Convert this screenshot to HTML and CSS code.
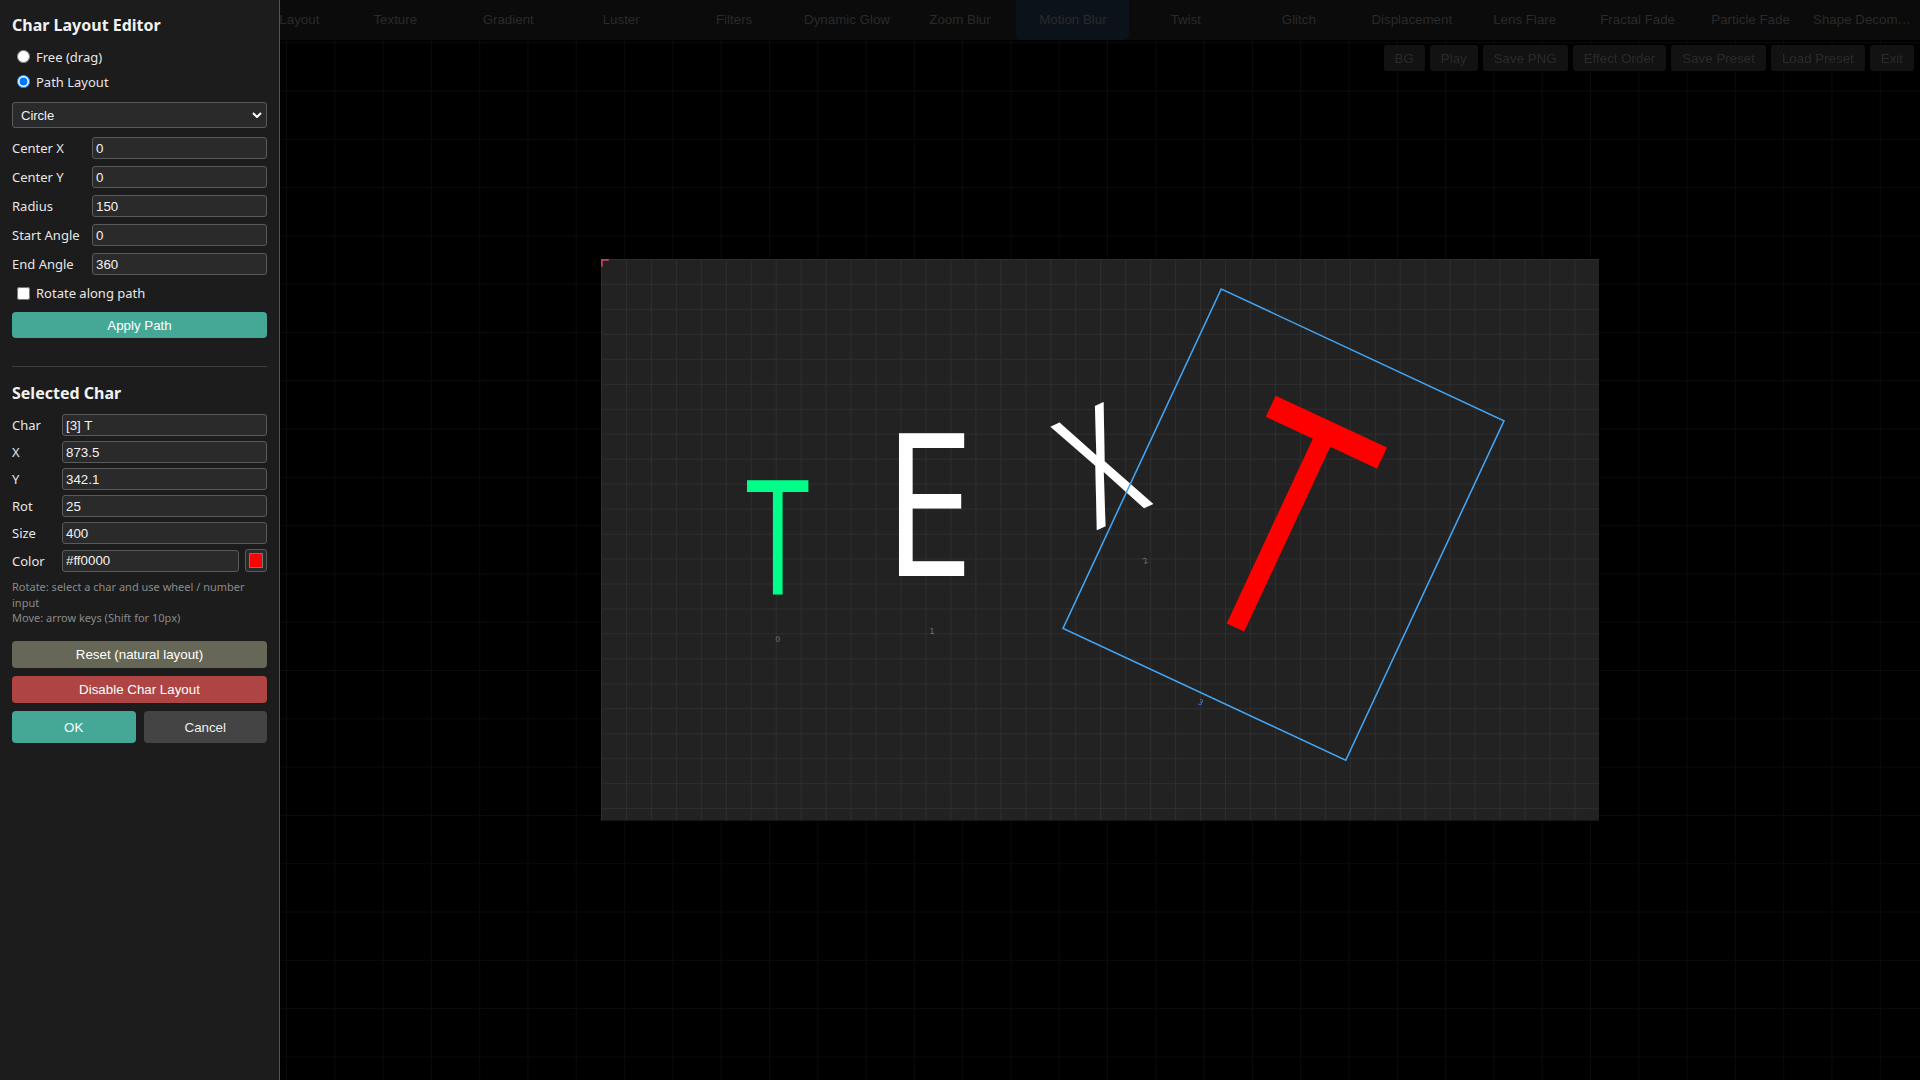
FILE: index.html
```html
<!DOCTYPE html>
<html lang="en">
<head>
<meta charset="utf-8">
<title>Char Layout Editor</title>
<link rel="stylesheet" href="styles.css">
</head>
<body>
<main class="stage">
  <div class="canvas">
    <svg class="scene" viewBox="0 0 1280 720" preserveAspectRatio="none">
      <defs>
        <pattern id="grid" width="32" height="32" patternUnits="userSpaceOnUse">
          <path class="grid-line" d="M0 0H32M0 0V32"/>
        </pattern>
      </defs>
      <rect class="canvas-bg" width="1280" height="720"/>
      <rect width="1280" height="720" fill="url(#grid)"/>
      <path class="corner-mark" d="M1 10V1H10"/>

      <g transform="translate(226.5 356.4)">
        <g transform="scale(0.74 1.02)"><text class="glyph" y="71.4" font-size="200" fill="#00ff88">T</text></g>
        <text class="idx" y="134.3">0</text>
      </g>

      <g transform="translate(420 315.4)">
        <g transform="scale(0.84 1.02)"><text class="glyph" y="89.3" font-size="250" fill="#ffffff">E</text></g>
        <text class="idx" x="4.4" y="165">1</text>
      </g>

      <g transform="translate(641 265) rotate(-25)">
        <g transform="scale(0.7 1.02)"><text class="glyph" y="71.4" font-size="200" fill="#ffffff">X</text></g>
        <text class="idx" y="138">2</text>
      </g>

      <g transform="translate(875 340.5) rotate(25)">
        <g transform="scale(0.74 1.02)"><text class="glyph" y="142.8" font-size="400" fill="#ff0000">T</text></g>
        <rect class="sel-box" x="-200" y="-240" width="400" height="480"/>
        <text class="idx idx-sel" y="255">3</text>
      </g>
    </svg>
  </div>
</main>

<header class="topbar">
  <nav class="tabs">
    <div class="tab tab-first">Layout</div>
    <div class="tab">Texture</div>
    <div class="tab">Gradient</div>
    <div class="tab">Luster</div>
    <div class="tab">Filters</div>
    <div class="tab">Dynamic Glow</div>
    <div class="tab">Zoom Blur</div>
    <div class="tab active">Motion Blur</div>
    <div class="tab">Twist</div>
    <div class="tab">Glitch</div>
    <div class="tab">Displacement</div>
    <div class="tab">Lens Flare</div>
    <div class="tab">Fractal Fade</div>
    <div class="tab">Particle Fade</div>
    <div class="tab">Shape Decomposition</div>
  </nav>
  <div class="toolbar">
    <button class="tool-btn">BG</button>
    <button class="tool-btn">Play</button>
    <button class="tool-btn">Save PNG</button>
    <button class="tool-btn">Effect Order</button>
    <button class="tool-btn">Save Preset</button>
    <button class="tool-btn">Load Preset</button>
    <button class="tool-btn">Exit</button>
  </div>
</header>

<aside class="editor">
  <h2 class="editor-title">Char Layout Editor</h2>
  <div class="mode-group">
    <label class="check-row"><input type="radio" name="mode">Free (drag)</label>
    <label class="check-row"><input type="radio" name="mode" checked>Path Layout</label>
  </div>
  <div class="select-wrap">
    <select class="field select"><option>Circle</option></select>
    <svg class="chevron" viewBox="0 0 10 6"><path d="M1 1l4 4 4-4"/></svg>
  </div>
  <div class="path-fields">
    <label class="field-row"><span class="field-label">Center X</span><input class="field" value="0"></label>
    <label class="field-row"><span class="field-label">Center Y</span><input class="field" value="0"></label>
    <label class="field-row"><span class="field-label">Radius</span><input class="field" value="150"></label>
    <label class="field-row"><span class="field-label">Start Angle</span><input class="field" value="0"></label>
    <label class="field-row"><span class="field-label">End Angle</span><input class="field" value="360"></label>
  </div>
  <label class="check-row rotate-row"><input type="checkbox">Rotate along path</label>
  <button class="btn btn-teal btn-apply">Apply Path</button>

  <div class="divider"></div>

  <h2 class="editor-title">Selected Char</h2>
  <div class="char-fields">
    <label class="field-row"><span class="field-label">Char</span><input class="field" value="[3] T"></label>
    <label class="field-row"><span class="field-label">X</span><input class="field" value="873.5"></label>
    <label class="field-row"><span class="field-label">Y</span><input class="field" value="342.1"></label>
    <label class="field-row"><span class="field-label">Rot</span><input class="field" value="25"></label>
    <label class="field-row"><span class="field-label">Size</span><input class="field" value="400"></label>
    <div class="field-row color-row"><span class="field-label">Color</span><input class="field" value="#ff0000"><span class="swatch"><span class="swatch-fill"></span></span></div>
  </div>
  <p class="hint">Rotate: select a char and use wheel / number input<br>Move: arrow keys (Shift for 10px)</p>
  <button class="btn btn-olive btn-reset">Reset (natural layout)</button>
  <button class="btn btn-red btn-disable">Disable Char Layout</button>
  <div class="btn-pair">
    <button class="btn btn-teal btn-lg">OK</button>
    <button class="btn btn-grey btn-lg">Cancel</button>
  </div>
</aside>
</body>
</html>
```

FILE: styles.css
```css
html, body {
  margin: 0;
  height: 100%;
}

body {
  overflow: hidden;
  background-color: #000;
  background-image:
    linear-gradient(90deg, #0b0b0b 1px, transparent 1px),
    linear-gradient(180deg, #0b0b0b 1px, transparent 1px);
  background-size: 48.3px 48.3px;
  background-position: 44.5px 42.2px;
  font-family: "Noto Sans", "Open Sans", sans-serif;
}

/* ---------- stage ---------- */
.stage {
  height: 100vh;
  margin-left: 280px;
  display: flex;
  align-items: center;
  justify-content: center;
}

.canvas {
  width: 998.4px;
  height: 561.6px;
}

.scene {
  display: block;
  width: 100%;
  height: 100%;
}

.canvas-bg { fill: #222; }

.grid-line {
  fill: none;
  stroke: #2e2e2e;
  stroke-width: 2.6;
}

.corner-mark {
  fill: none;
  stroke: #c8405a;
  stroke-width: 2.4;
}

.glyph {
  font-family: "Open Sans", "Noto Sans", sans-serif;
  font-weight: 400;
  text-anchor: middle;
}

.idx {
  font-family: "DejaVu Sans", sans-serif;
  font-size: 10px;
  fill: #777;
  text-anchor: middle;
}

.idx-sel { fill: #4b8fd6; }

.sel-box {
  fill: none;
  stroke: #42a5f5;
  stroke-width: 2;
}

/* ---------- top bar ---------- */
.topbar {
  position: fixed;
  top: 0;
  left: 0;
  right: 0;
}

.tabs {
  display: grid;
  grid-template-columns: repeat(17, 1fr);
  height: 40px;
  background: #0b0b0b;
}

.tab {
  min-width: 0;
  padding: 0 6px;
  text-align: center;
  white-space: nowrap;
  overflow: hidden;
  text-overflow: ellipsis;
  color: #2a2a2a;
  font: 13.33px/40px "Liberation Sans", Arial, sans-serif;
}

.tab-first {
  grid-column-start: 3;
  padding-left: 40px;
}

.tab.active {
  background: #0c1219;
  border-radius: 0 0 6px 6px;
}

.toolbar {
  display: flex;
  justify-content: flex-end;
  gap: 5px;
  padding: 5px 6px 0;
}

.tool-btn {
  height: 26px;
  padding: 0 11px;
  border: none;
  border-radius: 3px;
  background: #121212;
  color: #2b2b2b;
  font: 13.33px "Liberation Sans", Arial, sans-serif;
}

/* ---------- editor panel ---------- */
.editor {
  position: fixed;
  top: 0;
  left: 0;
  bottom: 0;
  width: 280px;
  box-sizing: border-box;
  padding: 14px 12px 0;
  background: #1c1c1c;
  border-right: 1px solid #555;
  color: #e6e6e6;
  font-size: 13px;
}

.editor-title {
  margin: 0;
  font-size: 16px;
  font-weight: 700;
  line-height: 22px;
  color: #f2f2f2;
}

.mode-group { margin-top: 8px; }

.check-row {
  display: flex;
  align-items: center;
  height: 25px;
}

.check-row input {
  margin: 0 6px 0 5px;
}

.select-wrap {
  position: relative;
  margin-top: 8px;
}

.field {
  box-sizing: border-box;
  height: 22px;
  padding: 0 3px;
  background: #2a2a2a;
  border: 1px solid #5a5a5a;
  border-radius: 3px;
  color: #f2f2f2;
  font: 13.33px "Liberation Sans", Arial, sans-serif;
  outline: none;
}

.select {
  display: block;
  width: 100%;
  height: 26px;
  padding: 0 8px;
  appearance: none;
  font-size: 13px;
}

.chevron {
  position: absolute;
  right: 5px;
  top: 10px;
  width: 10px;
  height: 6px;
  fill: none;
  stroke: #fff;
  stroke-width: 2;
}

.path-fields {
  margin-top: 9px;
  display: flex;
  flex-direction: column;
  gap: 7px;
}

.field-row {
  display: flex;
  align-items: center;
}

.field-label {
  flex: none;
  width: 80px;
}

.field-row .field {
  flex: 1;
  min-width: 0;
}

.rotate-row {
  margin-top: 8px;
  height: 20px;
}

.btn {
  display: block;
  width: 100%;
  padding: 0;
  border: none;
  border-radius: 4px;
  color: #fff;
  font: 13.33px "Liberation Sans", Arial, sans-serif;
}

.btn-teal { background: #45a896; }
.btn-olive { background: #676757; }
.btn-red { background: #ae4444; }
.btn-grey { background: #444; color: #eee; }

.btn-apply {
  margin-top: 9px;
  height: 26px;
}

.divider {
  height: 1px;
  background: #3e3e3e;
  margin: 28px 0 15px;
}

.char-fields {
  margin-top: 10px;
  display: flex;
  flex-direction: column;
  gap: 5px;
}

.char-fields .field-label { width: 50px; }

.color-row { height: 23px; }

.swatch {
  flex: none;
  display: flex;
  width: 22px;
  height: 23px;
  margin-left: 6px;
  padding: 3px;
  box-sizing: border-box;
  background: #2a2a2a;
  border: 1px solid #5a5a5a;
  border-radius: 3px;
}

.swatch-fill {
  flex: 1;
  background: #f00;
  border: 1px solid #777;
}

.hint {
  margin: 7px 0 0;
  font-size: 11px;
  line-height: 15.5px;
  color: #8a8a8a;
}

.btn-reset {
  margin-top: 15.5px;
  height: 27px;
}

.btn-disable {
  margin-top: 8px;
  height: 27px;
}

.btn-pair {
  margin-top: 8px;
  display: flex;
  gap: 8px;
}

.btn-lg {
  flex: 1;
  height: 32px;
}
```
